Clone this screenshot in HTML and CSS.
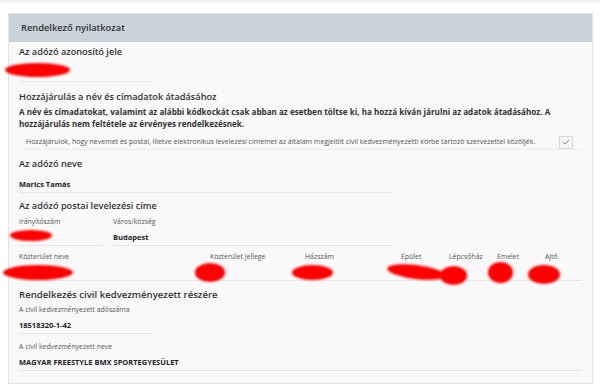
FILE: index.html
```html
<!DOCTYPE html>
<html lang="hu">
<head>
    <meta charset="UTF-8">
    <meta name="viewport" content="width=device-width, initial-scale=1.0">
    <title>Rendelkező nyilatkozat</title>
    <link rel="stylesheet" href="styles.css">
</head>
<body>
    <div class="topbar"></div>

    <div class="panel">
        <div class="panel-head">Rendelkező nyilatkozat</div>

        <div class="panel-body">
            <div class="title first">Az adózó azonosító jele</div>
            <div class="value short id-value">
                <span class="redact r-id"></span>
            </div>

            <div class="title section">Hozzájárulás a név és címadatok átadásához</div>
            <p class="note">A név és címadatokat, valamint az alábbi kódkockát csak abban az esetben töltse ki, ha hozzá kíván járulni az adatok átadásához. A hozzájárulás nem feltétele az érvényes rendelkezésnek.</p>

            <div class="consent">
                <span>Hozzájárulok, hogy nevemet és postai, illetve elektronikus levelezési címemet az általam megjelölt civil kedvezményezetti körbe tartozó szervezettel közöljék.</span>
                <span class="check">
                    <svg width="8" height="6" viewBox="0 0 8 6"><path d="M0.8 3.1 L2.9 5.1 L7.2 0.8" fill="none" stroke="#777" stroke-width="0.9"/></svg>
                </span>
            </div>

            <div class="title name-title">Az adózó neve</div>
            <div class="value mid name-value">Marics Tamás</div>

            <div class="title addr-title">Az adózó postai levelezési címe</div>
            <div class="grid city-grid">
                <div class="label">Irányítószám</div>
                <div class="label">Város/község</div>
                <div class="value"><span class="redact r-zip"></span></div>
                <div class="value">Budapest</div>
            </div>

            <div class="street">
                <div class="grid street-grid">
                    <div class="label">Közterület neve</div>
                    <div class="label">Közterület jellege</div>
                    <div class="label">Házszám</div>
                    <div class="label">Épület</div>
                    <div class="label">Lépcsőház</div>
                    <div class="label">Emelet</div>
                    <div class="label">Ajtó</div>
                    <div class="cell"><span class="redact r-street"></span></div>
                    <div class="cell"><span class="redact r-type"></span></div>
                    <div class="cell"><span class="redact r-no"></span></div>
                    <div class="cell"><span class="redact r-bld"></span></div>
                    <div class="cell"><span class="redact r-stair"></span></div>
                    <div class="cell"><span class="redact r-floor"></span></div>
                    <div class="cell"><span class="redact r-door"></span></div>
                </div>
            </div>

            <div class="title civil-title">Rendelkezés civil kedvezményezett részére</div>
            <div class="label tax-label">A civil kedvezményezett adószáma</div>
            <div class="value short">18518320-1-42</div>
            <div class="label org-label">A civil kedvezményezett neve</div>
            <div class="value">MAGYAR FREESTYLE BMX SPORTEGYESÜLET</div>
        </div>
    </div>
</body>
</html>
```

FILE: styles.css
```css
body {
    margin: 0;
    padding: 0;
    font-family: "Open Sans", "Liberation Sans", sans-serif;
    background-color: #fff;
    color: #333;
}

.topbar {
    height: 3px;
    background-color: #f2f3f5;
}

.panel {
    margin: 10px 0 0 8px;
    width: 583px;
    border: 1px solid #e1e3e6;
    background-color: #f9f9f9;
}

.panel-head {
    height: 28px;
    line-height: 28px;
    padding-left: 12px;
    background-color: #c8d3dc;
    font-size: 9.3px;
    font-weight: 600;
    color: #333;
}

.panel-body {
    padding: 0 10px 12px 10px;
}

.title {
    font-size: 9.2px;
    font-weight: 600;
    line-height: 16px;
    color: #333;
}

.title.first {
    line-height: 20px;
}

.title.section {
    margin-top: 7px;
}

.note {
    margin: 1px 0 0 0;
    font-size: 8.1px;
    font-weight: 700;
    line-height: 12px;
    color: #333;
}

.consent {
    margin-top: 4px;
    height: 15px;
    display: flex;
    align-items: center;
    justify-content: space-between;
    padding-left: 7px;
    padding-right: 9px;
    border-bottom: 1px solid #eceef0;
    font-size: 7px;
    color: #555;
}

.check {
    width: 12px;
    height: 11px;
    margin-top: 1px;
    border: 1px solid #d3d8de;
    background-color: #f3f5f7;
    display: flex;
    align-items: center;
    justify-content: center;
}

.name-title {
    margin-top: 6px;
}

.addr-title {
    margin-top: 5px;
}

.civil-title {
    margin-top: 6px;
    font-size: 9.6px;
}

.label {
    font-size: 6.9px;
    line-height: 12px;
    color: #555;
}

.value {
    position: relative;
    height: 16px;
    padding-top: 1px;
    line-height: 16px;
    font-size: 7.5px;
    font-weight: 700;
    color: #222;
    border-bottom: 1px solid #e6e7e9;
}

.value.short {
    width: 133px;
}

.value.mid {
    width: 373px;
}

.id-value {
    height: 18px;
}

.name-value {
    height: 16px;
    padding-top: 4px;
}

.grid {
    display: grid;
    column-gap: 10px;
}

.city-grid {
    margin-top: 2px;
    grid-template-columns: 84px 279px;
}

.street {
    margin-top: 5px;
    border-bottom: 1px solid #e6e7e9;
}

.street-grid {
    grid-template-columns: 181px 85px 86px 38px 38px 38px 37px;
}

.cell {
    position: relative;
    height: 17px;
}

.tax-label {
    margin-top: 1px;
}

.org-label {
    margin-top: 7px;
}

/* redaction marks painted over the values */
.redact {
    position: absolute;
    background-color: #ff0000;
    border-radius: 50%;
    filter: blur(1.1px);
}

.r-id { left: -14px; top: 1px; width: 65px; height: 14px; }
.r-zip { left: -9px; top: 2px; width: 42px; height: 11px; }
.r-street { left: -16px; top: 2px; width: 70px; height: 15px; }
.r-type { left: -15px; top: 0; width: 30px; height: 19px; }
.r-no { left: -13px; top: 2px; width: 41px; height: 15px; }
.r-bld { left: -14px; top: 2px; width: 58px; height: 14px; transform: rotate(7deg); }
.r-stair { left: -9px; top: 3px; width: 27px; height: 19px; }
.r-floor { left: -9px; top: -1px; width: 25px; height: 21px; }
.r-door { left: -17px; top: 2px; width: 32px; height: 19px; }
```
